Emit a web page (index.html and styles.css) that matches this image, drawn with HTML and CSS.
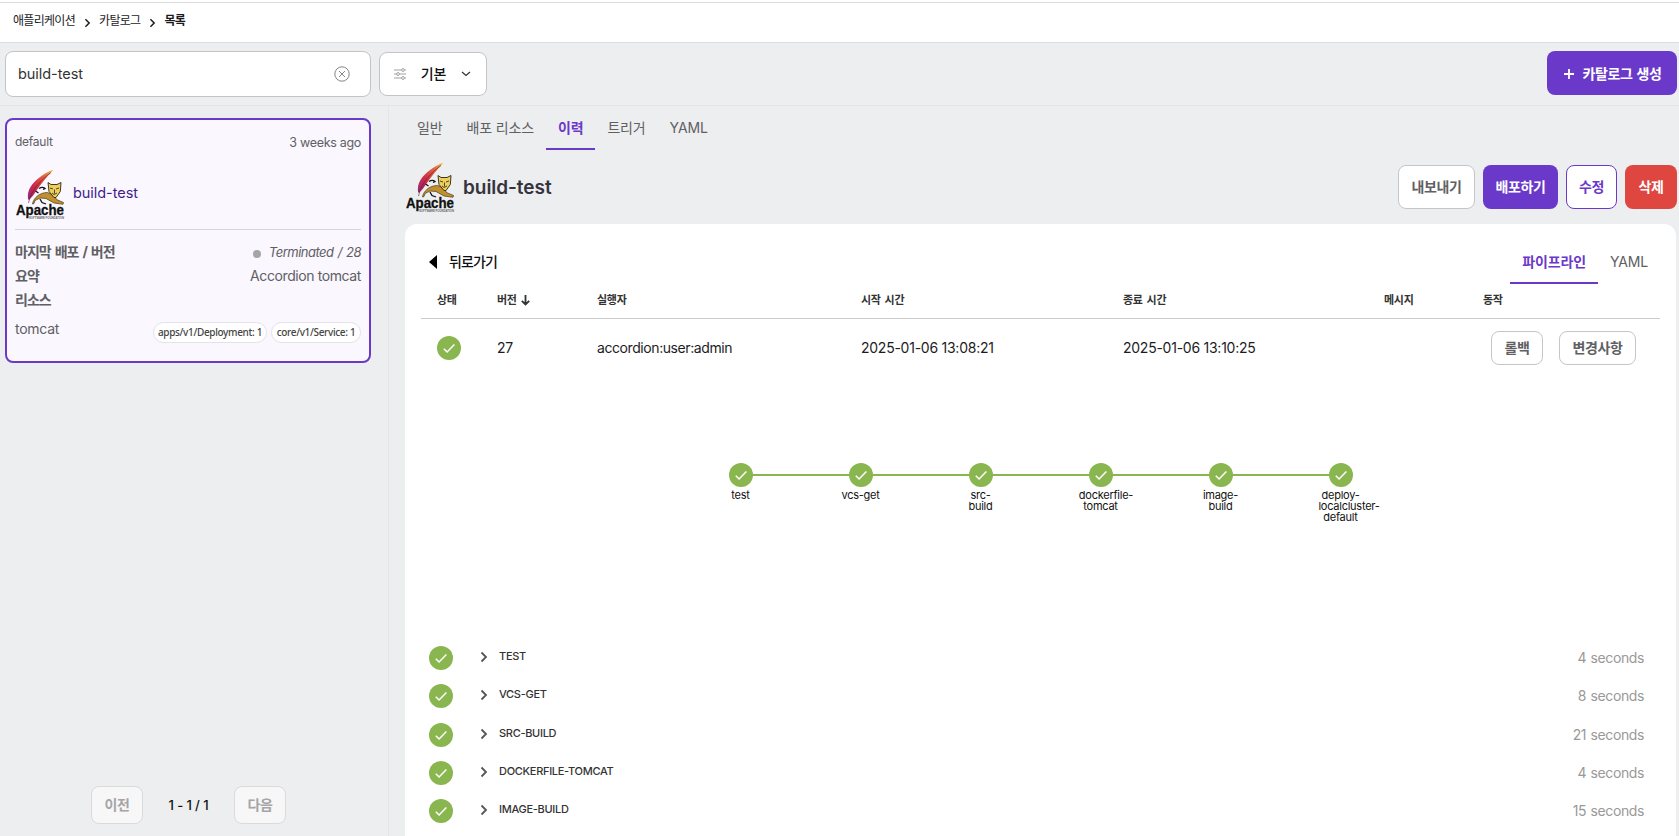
FILE: index.html
```html
<!DOCTYPE html>
<html lang="ko">
<head>
<meta charset="utf-8">
<title>카탈로그</title>
<link rel="stylesheet" href="styles.css">
</head>
<body>
<svg class="defs" width="0" height="0">
  <defs>
    <linearGradient id="feather" x1="0" y1="1" x2="1" y2="0">
      <stop offset="0" stop-color="#8b2a7c"/><stop offset=".35" stop-color="#cc2848"/><stop offset=".7" stop-color="#e0603f"/><stop offset="1" stop-color="#f3c13d"/>
    </linearGradient>
    <symbol id="logo" viewBox="0 0 50 50">
      <path d="M38.500 .8C29 4 20 11 15.500 18c-2.500 4-3 8-2.500 12l1 1c3-3 5-5.500 7.500-9.500C26.500 14 33 7 38.500.8Z" fill="url(#feather)"/>
      <path d="M36 3.500C26 11 16 21 13.500 34" fill="none" stroke="#5a1836" stroke-width=".6"/>
      <path d="M24 19.500c3-2 5-1 6 0l-2 1M20.500 22l3 2" fill="none" stroke="#111" stroke-width="1.300"/>
      <path d="M17.500 35c1-6 7-11.500 15-11.500l7 3 2 4 7 3-.5 1.800-9-1.300-8-4.500-6-.5-5 2.500-1 3Z" fill="#c08f2e" stroke="#4a3a18" stroke-width=".7"/>
      <path d="M25 30l2 3.500 4 1.500" fill="none" stroke="#111" stroke-width="1.300"/>
      <path d="m33 13.500 3 2h6l4-2-.7 9-4.300 6h-2l-5-6Z" fill="#efcf5c" stroke="#2a2417" stroke-width=".9"/>
      <path d="m35 19 3 1m6-1-3 1m-4 4 2 1.500 3-1.500m-2.500-3.500v4" fill="none" stroke="#2a2417" stroke-width=".8"/>
      <text x="1" y="46" textLength="48" lengthAdjust="spacingAndGlyphs" class="logo-name">Apache</text>
      <text x="14" y="49.500" textLength="35" lengthAdjust="spacingAndGlyphs" class="logo-sub">SOFTWARE FOUNDATION</text>
    </symbol>
    <symbol id="ok" viewBox="0 0 24 24">
      <circle cx="12" cy="12" r="12" fill="#8ab64f"/>
      <path d="m6.800 12.700 3.300 3.300 7.300-7.500" fill="none" stroke="#fff" stroke-width="1.500"/>
    </symbol>
    <symbol id="chev" viewBox="0 0 8 12"><path d="m1.500 1.500 4.500 4.500-4.500 4.500" fill="none" stroke="currentColor" stroke-width="1.800"/></symbol>
  </defs>
</svg>

<nav class="crumbs">
  <span class="crumb">애플리케이션</span><svg class="crumb-sep"><use href="#chev"/></svg>
  <span class="crumb">카탈로그</span><svg class="crumb-sep"><use href="#chev"/></svg>
  <span class="crumb current">목록</span>
</nav>

<header class="toolbar">
  <div class="search"><span>build-test</span>
    <svg width="16" height="16" viewBox="0 0 16 16" fill="none" stroke="#858585" stroke-width="1"><circle cx="8" cy="8" r="7.200"/><path d="m5 5 6 6m0-6-6 6"/></svg>
  </div>
  <div class="select">
    <svg width="12" height="12" viewBox="0 0 12 12" fill="none" stroke="#999" stroke-width=".9"><path d="M0 2h7.500m3 0H12M0 6h2.500m3 0H12M0 10h7.500m3 0H12"/><circle cx="9" cy="2" r="1.400"/><circle cx="4" cy="6" r="1.400"/><circle cx="9" cy="10" r="1.400"/></svg>
    <span>기본</span>
    <svg width="10" height="6" viewBox="0 0 10 6" fill="none" stroke="#333" stroke-width="1.200"><path d="m1 1 4 3.500L9 1"/></svg>
  </div>
  <button class="btn primary create"><svg width="10" height="10" viewBox="0 0 10 10" stroke="#fff" stroke-width="1.800"><path d="M5 0v10M0 5h10"/></svg>카탈로그 생성</button>
</header>

<div class="body">
  <aside class="side">
    <article class="card">
      <div class="card-top"><span class="ns">default</span><span class="ago">3 weeks ago</span></div>
      <div class="card-name"><svg class="logo"><use href="#logo"/></svg><span>build-test</span></div>
      <div class="line"><b>마지막 배포 / 버전</b><span class="status"><i class="dot"></i><em>Terminated / 28</em></span></div>
      <div class="line"><b>요약</b><span class="summary">Accordion tomcat</span></div>
      <div class="line"><b>리소스</b></div>
      <div class="resources"><span class="res-name">tomcat</span><span class="chip chip-a">apps/v1/Deployment: 1</span><span class="chip chip-b">core/v1/Service: 1</span></div>
    </article>
    <div class="pager"><button class="btn muted">이전</button><span>1 - 1 / 1</span><button class="btn muted">다음</button></div>
  </aside>

  <main class="main">
    <div class="tabs">
      <span class="tab">일반</span><span class="tab">배포 리소스</span><span class="tab active">이력</span><span class="tab">트리거</span><span class="tab">YAML</span>
    </div>
    <div class="title-row">
      <svg class="logo"><use href="#logo"/></svg>
      <h1>build-test</h1>
      <div class="actions">
        <button class="btn plain export">내보내기</button><button class="btn primary deploy">배포하기</button><button class="btn outline edit">수정</button><button class="btn danger del">삭제</button>
      </div>
    </div>

    <section class="panel">
      <div class="panel-head">
        <svg width="8" height="14" viewBox="0 0 8 14"><path d="M8 0v14L0 7Z"/></svg>
        <span class="back">뒤로가기</span>
        <div class="subtabs"><span class="tab active">파이프라인</span><span class="tab">YAML</span></div>
      </div>
      <div class="grid thead">
        <span>상태</span>
        <span class="sort">버전<svg width="10" height="11" viewBox="0 0 10 11" fill="none" stroke="#333" stroke-width="1.800"><path d="M4.500 0v9.500M.8 5.800l3.700 3.700 3.700-3.700"/></svg></span>
        <span>실행자</span><span>시작 시간</span><span>종료 시간</span><span>메시지</span><span>동작</span>
      </div>
      <div class="grid trow">
        <svg class="ok"><use href="#ok"/></svg>
        <span>27</span><span class="user">accordion:user:admin</span><span>2025-01-06 13:08:21</span><span>2025-01-06 13:10:25</span><span></span>
        <div class="row-actions"><button class="btn plain small rollback">롤백</button><button class="btn plain small changes">변경사항</button></div>
      </div>

      <svg class="pipeline" width="720" height="90" viewBox="0 0 720 90">
        <path d="M30 23h600" stroke="#8ab64f" stroke-width="2"/>
        <use href="#ok" x="18" y="11" width="24" height="24"/>
        <use href="#ok" x="138" y="11" width="24" height="24"/>
        <use href="#ok" x="258" y="11" width="24" height="24"/>
        <use href="#ok" x="378" y="11" width="24" height="24"/>
        <use href="#ok" x="498" y="11" width="24" height="24"/>
        <use href="#ok" x="618" y="11" width="24" height="24"/>
        <g class="labels">
          <text x="29.500" y="47">test</text>
          <text x="149.500" y="47">vcs-get</text>
          <text x="269.500" y="47">src-</text><text x="269.500" y="58">build</text>
          <text x="395" y="47">dockerfile-</text><text x="389.500" y="58">tomcat</text>
          <text x="509.500" y="47">image-</text><text x="509.500" y="58">build</text>
          <text x="629.500" y="47">deploy-</text><text x="638" y="58">localcluster-</text><text x="629.500" y="69">default</text>
        </g>
      </svg>

      <ul class="steps">
        <li><svg class="ok"><use href="#ok"/></svg><svg class="arrow"><use href="#chev"/></svg><span class="step">TEST</span><span class="time">4 seconds</span></li>
        <li><svg class="ok"><use href="#ok"/></svg><svg class="arrow"><use href="#chev"/></svg><span class="step">VCS-GET</span><span class="time">8 seconds</span></li>
        <li><svg class="ok"><use href="#ok"/></svg><svg class="arrow"><use href="#chev"/></svg><span class="step">SRC-BUILD</span><span class="time">21 seconds</span></li>
        <li><svg class="ok"><use href="#ok"/></svg><svg class="arrow"><use href="#chev"/></svg><span class="step">DOCKERFILE-TOMCAT</span><span class="time">4 seconds</span></li>
        <li><svg class="ok"><use href="#ok"/></svg><svg class="arrow"><use href="#chev"/></svg><span class="step">IMAGE-BUILD</span><span class="time">15 seconds</span></li>
      </ul>
    </section>
  </main>
</div>
</body>
</html>
```
FILE: styles.css
```css
* { box-sizing: border-box; }
body {
  margin: 0; height: 836px; overflow: hidden; display: flex; flex-direction: column;
  background: #edeef0; color: #1c1c1e;
  font: 14px/20px Inter, "Noto Sans CJK KR", sans-serif; letter-spacing: -.25px; white-space: nowrap;
}
.defs { position: absolute; }
svg { display: block; flex: none; }
.logo { width: 50px; height: 50px; }
.logo-name { font: 700 14px "Liberation Sans", sans-serif; fill: #111; stroke: #111; stroke-width: .3; letter-spacing: 0; }
.logo-sub { font: 700 2.6px "Liberation Sans", sans-serif; fill: #666; letter-spacing: 0; }
.ok { width: 24px; height: 24px; }

.crumbs { height: 43px; flex: none; display: flex; align-items: center; padding: 0 13px; background: #fff; border-bottom: 1px solid #ddd; box-shadow: inset 0 2px #fff, inset 0 3px #ddd; font-size: 12px; }
.crumb { letter-spacing: -.7px; }
.crumb.current { font-weight: 700; }
.crumb-sep { width: 7px; height: 10px; margin: 3px 8px 0 9px; }

.toolbar { height: 63px; flex: none; display: flex; align-items: center; gap: 8px; padding: 0 2px 0 5px; border-bottom: 1px solid #e4e5e7; }
.search, .select { display: flex; align-items: center; background: #fff; border: 1px solid #c4c4c6; border-radius: 8px; }
.search { width: 366px; height: 46px; padding: 0 20px 0 12px; justify-content: space-between; font-size: 14.5px; letter-spacing: -.05px; color: #333; }
.select { width: 108px; height: 44px; padding: 0 15px 0 14px; justify-content: space-between; font-weight: 500; color: #111; }
.btn { display: flex; align-items: center; justify-content: center; height: 44px; padding: 0; border: 1px solid transparent; border-radius: 8px; background: #fff; font: 700 14px/20px Inter, "Noto Sans CJK KR", sans-serif; letter-spacing: -.4px; white-space: nowrap; }
.primary { background: #6b39ca; color: #fff; }
.plain { border-color: #c6c6c8; color: #606063; }
.outline { border-color: #6b39ca; color: #6b39ca; }
.danger { background: #df4640; color: #fff; }
.create { width: 130px; gap: 9px; margin: 0 0 2px auto; padding: 1px 0 0 1px; word-spacing: 1px; }

.body { flex: 1; display: flex; min-height: 0; }
.side { width: 389px; flex: none; display: flex; flex-direction: column; padding: 12px 17px 12px 5px; border-right: 1px solid #e5e6e8; }
.card { height: 245px; padding: 11px 8px; background: #faf7ff; border: 2px solid #6b39ca; border-radius: 8px; color: #606063; }
.card-top { display: flex; justify-content: space-between; height: 20px; }
.ns { font-size: 12px; line-height: 22px; }
.ago { font-size: 12.5px; line-height: 23px; letter-spacing: -.3px; }
.card-name { display: flex; align-items: center; gap: 8px; height: 79px; margin-bottom: 10px; padding-top: 8px; border-bottom: 1px solid #d7d5db; color: #431c8c; font-size: 14.5px; letter-spacing: -.05px; }
.card-name span { padding-bottom: 3px; }
.line { display: flex; justify-content: space-between; height: 24px; line-height: 24px; }
.line b { letter-spacing: -.95px; word-spacing: 1.500px; }
.status { display: flex; align-items: center; gap: 8px; font-size: 13px; letter-spacing: -.5px; word-spacing: 1px; }
.status em { padding-bottom: 1px; }
.summary { letter-spacing: -.4px; }
.dot { width: 8px; height: 8px; margin-top: 4px; border-radius: 50%; background: #a5a5a7; }
.resources { display: flex; align-items: center; gap: 4px; margin-top: 9px; height: 22px; }
.res-name { margin-right: auto; padding-bottom: 6px; }
.chip { height: 21px; border: 1px solid #e4e2e8; border-radius: 11px; background: #fff; font: 500 10px/18px "Noto Sans", sans-serif; letter-spacing: -.33px; text-align: center; color: #444; }
.chip-a { width: 114px; }
.chip-b { width: 90px; }
.pager { margin-top: auto; display: flex; align-items: center; padding-left: 86px; color: #111; font-size: 13px; font-weight: 500; }
.pager span { width: 91px; text-align: center; letter-spacing: -.1px; }
.muted { width: 52px; height: 38px; background: #f7f7f7; border-color: #dadadc; color: #a5a5a8; }

.main { flex: 1; min-width: 0; padding: 0 3px 0 16px; display: flex; flex-direction: column; }
.tabs { display: flex; height: 44px; flex: none; }
.tab { height: 44px; padding: 12px 12px 0; color: #606063; letter-spacing: -.15px; }
.tab.active { border-bottom: 2px solid #6b39ca; color: #6b39ca; font-weight: 700; }
.title-row { display: flex; align-items: center; height: 74px; flex: none; gap: 8px; }
.title-row h1 { margin: 2px 0 0; font-size: 19px; line-height: 24px; font-weight: 600; color: #35343d; letter-spacing: -.05px; }
.actions { display: flex; gap: 8px; margin: 0 -1px 0 auto; }
.export { width: 77px; } .deploy { width: 75px; } .edit { width: 51px; } .del { width: 52px; }

.panel { flex: 1; min-height: 0; overflow: hidden; background: #fff; border-radius: 12px 12px 0 0; padding: 15px 16px 0; }
.panel-head { display: flex; align-items: center; height: 46px; padding-left: 8px; }
.back { margin-left: 12px; font-weight: 500; color: #111; letter-spacing: -.9px; }
.subtabs { display: flex; margin-left: auto; }
.grid { display: grid; grid-template-columns: 60px 100px 264px 262px 261px 99px 1fr; align-items: center; padding-left: 16px; }
.thead { height: 34px; padding-bottom: 3px; border-bottom: 1px solid #ccc; font-size: 11px; font-weight: 700; color: #333; word-spacing: 1.500px; }
.sort { display: flex; align-items: center; gap: 4px; }
.trow { height: 57px; }
.user { letter-spacing: -.42px; }
.row-actions { display: flex; gap: 16px; padding-left: 8px; }
.small { height: 34px; }
.rollback { width: 52px; } .changes { width: 77px; }
.pipeline { margin: 76px 0 0 290px; }
.labels { font-size: 11px; text-anchor: middle; fill: #111; }
.steps { list-style: none; margin: 97px 0 0; padding: 0 16px 0 8px; }
.steps li { display: flex; align-items: center; height: 38.25px; }
.arrow { width: 8px; height: 12px; margin: 0 11px 2px 27px; color: #555; }
.step { font-size: 11px; font-weight: 500; padding-bottom: 4px; color: #333; letter-spacing: -.3px; }
.time { margin-left: auto; color: #999; letter-spacing: -.4px; word-spacing: 1px; }
```
